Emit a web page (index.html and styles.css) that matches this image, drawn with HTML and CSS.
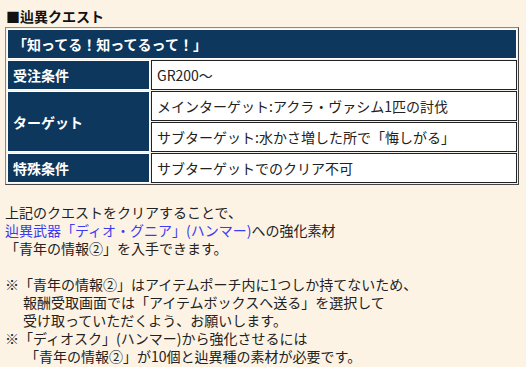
FILE: index.html
```html
<!DOCTYPE html>
<html lang="ja">
<head>
<meta charset="utf-8">
<link rel="stylesheet" href="styles.css">
</head>
<body>
<div class="page">
  <h3 class="heading">■辿異クエスト</h3>
  <table class="quest">
    <colgroup><col class="col-label"><col class="col-value"></colgroup>
    <tr><th class="title" colspan="2">「知ってる！知ってるって！」</th></tr>
    <tr><th class="label">受注条件</th><td class="value">GR200～</td></tr>
    <tr><th class="label" rowspan="2">ターゲット</th><td class="value">メインターゲット:アクラ・ヴァシム1匹の討伐</td></tr>
    <tr><td class="value">サブターゲット:水かさ増した所で「悔しがる」</td></tr>
    <tr><th class="label">特殊条件</th><td class="value">サブターゲットでのクリア不可</td></tr>
  </table>
  <div class="notes">
    <p>上記のクエストをクリアすることで、<br><a class="link" href="#">辿異武器「ディオ・グニア」(ハンマー)</a>への強化素材<br>「青年の情報②」を入手できます。</p>
    <p>※「青年の情報②」はアイテムポーチ内に1つしか持てないため、<br><span class="indent">報酬受取画面では「アイテムボックスへ送る」を選択して</span><br><span class="indent">受け取っていただくよう、お願いします。</span><br>※「ディオスク」(ハンマー)から強化させるには<br><span class="indent2">「青年の情報②」が10個と辿異種の素材が必要です。</span></p>
  </div>
</div>
</body>
</html>
```

FILE: styles.css
```css
html, body {
  margin: 0;
  padding: 0;
  background: #fdf3e5;
}
body {
  font-family: "Noto Sans CJK JP", sans-serif;
  font-size: 14px;
  line-height: 18px;
  color: #222;
}
.page {
  padding: 7px 8px 0 5px;
}
.heading {
  margin: 0 0 2px 0;
  padding-left: 1px;
  font-size: 14px;
  line-height: 18px;
  font-weight: bold;
  color: #111;
}
.quest {
  width: 514px;
  border-collapse: separate;
  border-spacing: 1px;
  border: 1px solid;
  border-color: #8a8a8a #444 #444 #8a8a8a;
  background: #f4f0ea;
  table-layout: fixed;
}
.col-label {
  width: 143px;
}
.quest th, .quest td {
  border: 1px solid;
  padding: 5px 5px;
  height: 18px;
  line-height: 18px;
  text-align: left;
  vertical-align: middle;
  font-size: 14px;
  white-space: nowrap;
}
.title {
  background: #0e375e;
  color: #fff;
  font-weight: bold;
  border-color: #555 #999 #999 #555;
}
.label {
  background: #0e375e;
  color: #fff;
  font-weight: bold;
  border-color: #555 #888 #888 #555;
}
.value {
  background: #fff;
  color: #222;
  font-weight: normal;
  border-color: #333 #888 #888 #333;
}
.notes {
  margin-top: 18px;
}
.notes p {
  margin: 0 0 18px 0;
}
.link {
  color: #3b3bf0;
  text-decoration: none;
}
.indent {
  padding-left: 18px;
}
.indent2 {
  padding-left: 20px;
}
```
